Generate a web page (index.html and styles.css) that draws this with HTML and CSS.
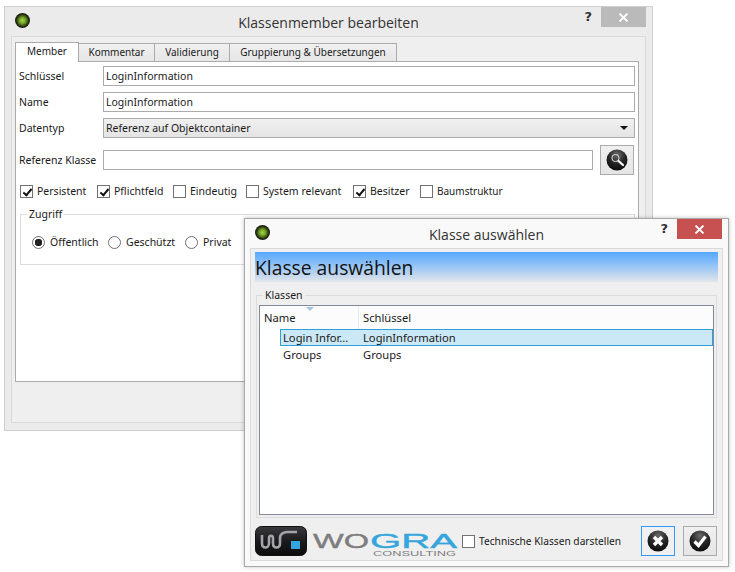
FILE: index.html
```html
<!DOCTYPE html>
<html>
<head>
    <title>Klassenmember bearbeiten</title>
    <link rel="stylesheet" href="styles.css">
</head>
<body>

<div class="window member-window">
    <div class="titlebar">
        <span class="app-dot"></span>
        <span class="title">Klassenmember bearbeiten</span>
        <span class="help">?</span>
        <span class="close"><svg width="11" height="9" viewBox="0 0 11 9"><path d="M1.5 .5 9.5 8.5M9.5 .5 1.5 8.5" stroke="#fff" stroke-width="1.8"/></svg></span>
    </div>
    <div class="client">
        <div class="tabs">
            <div class="tab active">Member</div>
            <div class="tab tab-2">Kommentar</div>
            <div class="tab tab-3">Validierung</div>
            <div class="tab tab-4">Gruppierung &amp; Übersetzungen</div>
        </div>
        <div class="pane">
            <div class="row">
                <label class="row-label">Schlüssel</label>
                <div class="field">LoginInformation</div>
            </div>
            <div class="row">
                <label class="row-label">Name</label>
                <div class="field">LoginInformation</div>
            </div>
            <div class="row">
                <label class="row-label">Datentyp</label>
                <div class="field combo">Referenz auf Objektcontainer<span class="arrow"></span></div>
            </div>
            <div class="row ref-row">
                <label class="row-label">Referenz Klasse</label>
                <div class="field ref-field"></div>
                <div class="icon-btn search-btn">
                    <svg width="22" height="22" viewBox="0 0 22 22">
                        <defs><radialGradient id="ball" cx="50%" cy="25%" r="75%"><stop offset="0" stop-color="#6a6a6a"/><stop offset=".55" stop-color="#262626"/><stop offset="1" stop-color="#0c0c0c"/></radialGradient></defs>
                        <circle cx="11" cy="11" r="10.5" fill="url(#ball)"/>
                        <circle cx="9.5" cy="9" r="3.6" fill="none" stroke="#ddd" stroke-width="1"/>
                        <path d="M12.5 12 17 16" stroke="#fff" stroke-width="2.2" stroke-linecap="round"/>
                    </svg>
                </div>
            </div>
            <div class="checks">
                <span class="check w-77"><span class="box on"></span>Persistent</span>
                <span class="check w-76"><span class="box on"></span>Pflichtfeld</span>
                <span class="check w-73"><span class="box"></span>Eindeutig</span>
                <span class="check w-107"><span class="box"></span>System relevant</span>
                <span class="check w-67"><span class="box on"></span>Besitzer</span>
                <span class="check narrow"><span class="box"></span>Baumstruktur</span>
            </div>
            <fieldset class="group">
                <legend>Zugriff</legend>
                <div class="radios">
                    <span class="radio w-76"><span class="dot on"></span>Öffentlich</span>
                    <span class="radio w-77"><span class="dot"></span>Geschützt</span>
                    <span class="radio"><span class="dot"></span>Privat</span>
                </div>
            </fieldset>
        </div>
    </div>
</div>

<div class="window picker-window">
    <div class="titlebar">
        <span class="app-dot"></span>
        <span class="title">Klasse auswählen</span>
        <span class="help">?</span>
        <span class="close red"><svg width="11" height="9" viewBox="0 0 11 9"><path d="M1.5 .5 9.5 8.5M9.5 .5 1.5 8.5" stroke="#fff" stroke-width="1.8"/></svg></span>
    </div>
    <div class="client">
        <div class="banner">Klasse auswählen</div>
        <fieldset class="list-group">
            <legend>Klassen</legend>
            <div class="list">
                <div class="list-head">
                    <div class="col-name">Name<span class="sort"></span></div>
                    <div class="col-key">Schlüssel</div>
                </div>
                <div class="item selected"><span class="item-name">Login Infor...</span><span>LoginInformation</span></div>
                <div class="item"><span class="item-name">Groups</span><span>Groups</span></div>
            </div>
        </fieldset>
        <div class="footer">
            <svg class="logo" width="202" height="30" viewBox="0 0 202 30">
                <defs><linearGradient id="logobg" x1="0" y1="0" x2="0" y2="1"><stop offset="0" stop-color="#3a3a3c"/><stop offset=".5" stop-color="#1b1b1d"/><stop offset="1" stop-color="#0b0b0c"/></linearGradient></defs>
                <rect x=".5" y=".5" width="51" height="29" rx="6" fill="url(#logobg)" stroke="#111"/>
                <path d="M7 9v8c0 6 7 6 7 0v-5c0-3 4-3 4 0v5c0 6 7 6 7 0v-5c0-5 5-6 8-6h9" fill="none" stroke="#a4a4a8" stroke-width="2.6"/>
                <rect x="36" y="15" width="9" height="8" fill="#35a5dc"/>
                <text x="58" y="22" class="logo-grey" textLength="56" lengthAdjust="spacingAndGlyphs">WO</text>
                <text x="115" y="22" class="logo-blue" textLength="87" lengthAdjust="spacingAndGlyphs">GRA</text>
                <text x="118" y="30" class="logo-small" textLength="83" lengthAdjust="spacingAndGlyphs">CONSULTING</text>
            </svg>
            <span class="check tech"><span class="box"></span>Technische Klassen darstellen</span>
            <div class="icon-btn focused">
                <svg width="22" height="22" viewBox="0 0 22 22">
                    <circle cx="11" cy="11" r="10.5" fill="url(#ball)"/>
                    <path d="M7 7 15 15M15 7 7 15" stroke="#fff" stroke-width="3.4"/>
                </svg>
            </div>
            <div class="icon-btn ok-btn">
                <svg width="22" height="22" viewBox="0 0 22 22">
                    <circle cx="11" cy="11" r="10.5" fill="url(#ball)"/>
                    <path d="M5.5 11.5 9.5 15.5 16.5 6.5" fill="none" stroke="#fff" stroke-width="3.2"/>
                </svg>
            </div>
        </div>
    </div>
</div>

</body>
</html>
```

FILE: styles.css
```css
body {
    margin: 0;
    background-color: #fff;
    font-family: "Noto Sans", Arial, sans-serif;
    font-size: 10.5px;
    color: #1a1a1a;
}

.window {
    position: absolute;
    box-sizing: border-box;
    border: 1px solid #cfcfcf;
    background-color: #ebebeb;
}

.member-window {
    left: 4px;
    top: 6px;
    width: 649px;
    height: 425px;
}

.picker-window {
    left: 244px;
    top: 218px;
    width: 485px;
    height: 349px;
    border-color: #a9a9a9;
    background-color: #f9f9f9;
    box-shadow: 0 0 4px rgba(0, 0, 0, 0.25);
}

.titlebar {
    height: 29px;
    display: flex;
    align-items: center;
    justify-content: center;
    position: relative;
}

.title {
    font-family: "Open Sans", sans-serif;
    font-size: 14px;
    color: #333;
    padding-top: 2px;
}

.app-dot {
    position: absolute;
    left: 10px;
    top: 6px;
    width: 15px;
    height: 15px;
    border-radius: 50%;
    background: radial-gradient(circle at 50% 50%, #a5d64a 0, #6f9e22 30%, #1a1f10 62%, #222 100%);
}

.help {
    position: absolute;
    right: 60px;
    top: 2px;
    font-family: "DejaVu Sans", sans-serif;
    font-size: 13px;
    font-weight: bold;
    color: #333;
}

.close {
    position: absolute;
    right: 6px;
    top: 0;
    width: 45px;
    height: 20px;
    background-color: #bababa;
    display: flex;
    align-items: center;
    justify-content: center;
}

.close.red {
    background-color: #c75050;
}

.client {
    margin: 0 6px;
    height: 387px;
    box-sizing: border-box;
    border: 1px solid #dadada;
    background-color: #efefef;
    padding: 5px 3px 0;
}

.picker-window .client {
    height: 313px;
    margin: 0 5px;
    padding: 3px 4px 0;
}

.tabs {
    display: flex;
    height: 19px;
    align-items: flex-end;
}

.tab {
    box-sizing: border-box;
    height: 18px;
    border: 1px solid #ababab;
    border-bottom: none;
    border-left: none;
    background: linear-gradient(#f0f0f0, #e6e6e6);
    text-align: center;
    font-size: 10px;
    line-height: 16px;
    margin-bottom: 0;
}

.tab.active {
    width: 64px;
    height: 20px;
    background: #fff;
    border-left: 1px solid #ababab;
    position: relative;
    z-index: 1;
    line-height: 17px;
    margin-bottom: -1px;
}

.tab-2 {
    width: 76px;
}

.tab-3 {
    width: 75px;
}

.tab-4 {
    width: 167px;
}

.pane {
    box-sizing: border-box;
    width: 624px;
    height: 321px;
    border: 1px solid #ababab;
    background-color: #fff;
    padding: 4px 3px;
}

.row {
    display: flex;
    align-items: center;
    margin-bottom: 6px;
}

.row-label {
    width: 84px;
    flex: none;
}

.field {
    box-sizing: border-box;
    flex: 1;
    height: 20px;
    border: 1px solid #ababab;
    background-color: #fff;
    line-height: 18px;
    padding-left: 2px;
    position: relative;
}

.combo {
    background: linear-gradient(#f0f0f0, #e4e4e4);
}

.arrow {
    position: absolute;
    right: 6px;
    top: 7px;
    border-left: 4px solid transparent;
    border-right: 4px solid transparent;
    border-top: 4px solid #111;
}

.ref-row {
    margin-top: 7px;
    margin-bottom: 0;
    height: 30px;
}

.ref-field {
    flex: none;
    width: 490px;
}

.icon-btn {
    box-sizing: border-box;
    width: 34px;
    height: 30px;
    flex: none;
    border: 1px solid #ababab;
    background: linear-gradient(#f0f0f0, #e5e5e5);
    display: flex;
    align-items: center;
    justify-content: center;
}

.search-btn {
    margin-left: 7px;
}

.focused {
    border-color: #3399ff;
    background: #f0f0f0;
    margin-left: auto;
}

.ok-btn {
    margin-left: 8px;
    margin-right: 1px;
}

.checks {
    display: flex;
    margin: 10px 0 0 1px;
    height: 13px;
    line-height: 13px;
}

.check {
    display: flex;
    align-items: center;
    flex: none;
}

.narrow {
    font-size: 10px;
}

.w-67 {
    width: 67px;
}

.w-73 {
    width: 73px;
}

.w-76 {
    width: 76px;
}

.w-77 {
    width: 77px;
}

.w-107 {
    width: 107px;
}

.box {
    box-sizing: border-box;
    width: 13px;
    height: 13px;
    margin-right: 4px;
    border: 1px solid #707070;
    background-color: #fff;
    flex: none;
    position: relative;
}

.box.on::after {
    content: "";
    position: absolute;
    left: 3.5px;
    top: 0.5px;
    width: 3px;
    height: 7px;
    border: solid #111;
    border-width: 0 2px 2px 0;
    transform: rotate(40deg);
}

.group {
    margin: 9px 0 0 1px;
    padding: 0;
    height: 56px;
    width: 613px;
    box-sizing: content-box;
    border: 1px solid #dcdcdc;
}

.group legend {
    margin-left: 6px;
    padding: 0 2px;
    line-height: 14px;
}

.radios {
    display: flex;
    line-height: 13px;
    margin: 15px 0 0 11px;
}

.radio {
    display: flex;
    align-items: center;
    flex: none;
}

.dot {
    box-sizing: border-box;
    width: 13px;
    height: 13px;
    margin-right: 5px;
    border: 1px solid #707070;
    border-radius: 50%;
    background-color: #fff;
    flex: none;
}

.dot.on {
    background: radial-gradient(circle, #222 0, #222 3.5px, #fff 4px);
}

.banner {
    height: 30px;
    margin-bottom: 6px;
    background: linear-gradient(#55a8ff, #e2e5ea);
    font-family: "Open Sans", sans-serif;
    font-size: 19.3px;
    line-height: 32px;
    color: #111;
}

.list-group {
    margin: 0 0 0 1px;
    padding: 3px 2px 2px;
    width: 455px;
    height: 223px;
    box-sizing: content-box;
    border: 1px solid #dcdcdc;
    min-width: 0;
}

.list-group legend {
    margin-left: 4px;
    padding: 0 2px;
    line-height: 14px;
}

.list {
    box-sizing: border-box;
    height: 210px;
    border: 1px solid #85879a;
    background-color: #fff;
    font-size: 11.2px;
}

.list-head {
    display: flex;
    height: 23px;
    line-height: 24px;
    background-color: #fcfcfc;
}

.col-name {
    width: 99px;
    box-sizing: border-box;
    padding-left: 4px;
    border-right: 1px solid #e4ecf4;
    position: relative;
}

.col-key {
    padding-left: 4px;
}

.sort {
    position: absolute;
    left: 46px;
    top: 1px;
    border-left: 4px solid transparent;
    border-right: 4px solid transparent;
    border-top: 4px solid #a3c4de;
}

.item {
    box-sizing: border-box;
    height: 17px;
    margin-left: 20px;
    display: flex;
    line-height: 15px;
    border: 1px solid transparent;
}

.item-name {
    width: 80px;
    flex: none;
    padding-left: 2px;
}

.selected {
    background-color: #cbe8f6;
    border-color: #2f9fd8;
}

.footer {
    display: flex;
    align-items: center;
    height: 30px;
    margin-top: 8px;
}

.tech {
    margin-left: 5px;
    font-size: 10.2px;
}

.logo {
    flex: none;
    overflow: visible;
}

.logo-grey,
.logo-blue {
    font-family: "Liberation Sans", sans-serif;
    font-size: 21px;
    stroke-width: 0.4px;
}

.logo-grey {
    fill: #7d7d80;
    stroke: #7d7d80;
}

.logo-blue {
    fill: #35a5dc;
    stroke: #35a5dc;
}

.logo-small {
    font-family: "Liberation Sans", sans-serif;
    font-size: 7px;
    fill: #7d7d80;
}
```
